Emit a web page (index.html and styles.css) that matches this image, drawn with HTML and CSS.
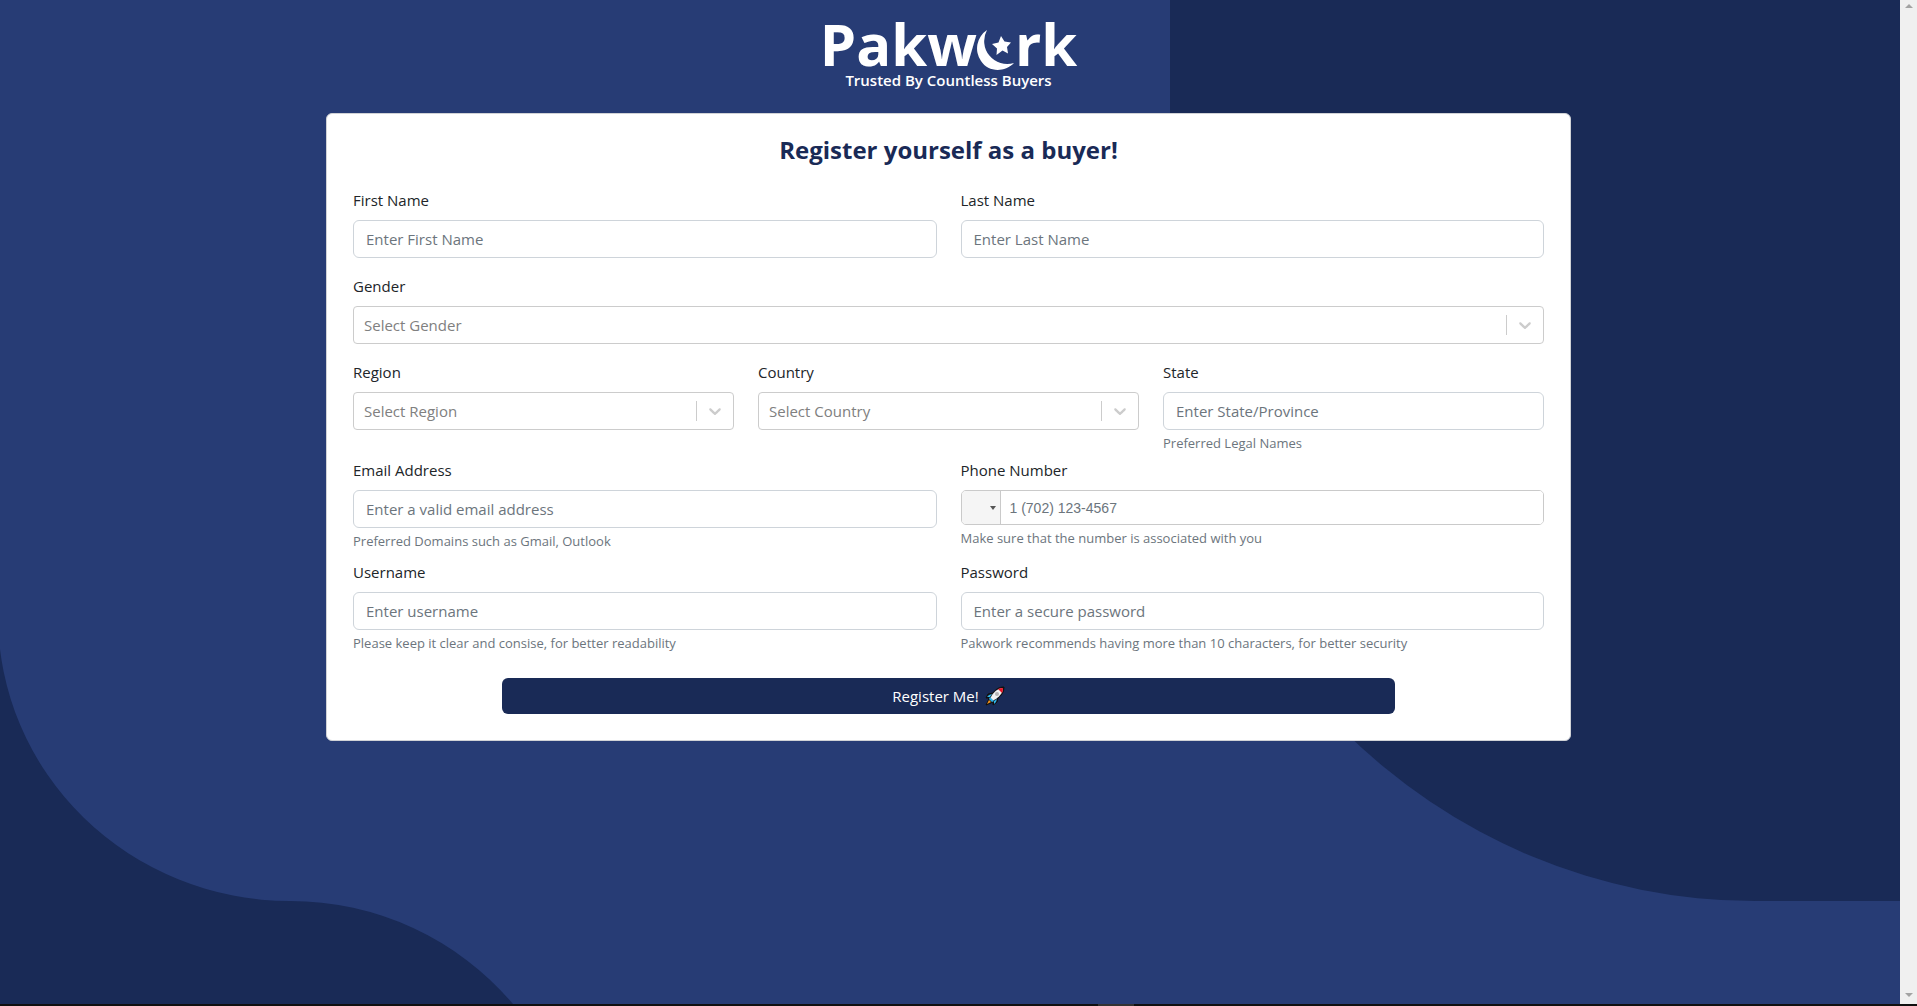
FILE: index.html
```html
<!DOCTYPE html>
<html lang="en">
<head>
<meta charset="utf-8">
<meta name="viewport" content="width=device-width, initial-scale=1">
<title>Pakwork – Register as a buyer</title>
<link rel="stylesheet" href="styles.css">
</head>
<body>
<div class="window">
  <div class="page">
    <svg class="backdrop" viewBox="0 0 1900 1004" preserveAspectRatio="none" aria-hidden="true">
      <path d="M1170 0H1900V901H1755A585 590 0 0 1 1170 311Z"/>
      <path d="M-2 616A292 285 0 0 0 290 901A290 285 0 0 1 513 1004H-2Z"/>
    </svg>

    <header class="brand">
      <div class="logo">
        <span>Pakw</span>
        <svg class="logo-moon" viewBox="0 0 38 40" aria-label="o" role="img">
          <path d="M10 0A22 22 0 0 0 4 31C11 42 27 43 37 33A23 23 0 0 1 10 0Z"/>
          <path d="M24 6L27.500 11.500L34 12.500L30 17L31 23.500L25.500 20.500L19.500 25L20 18.500L15 14L21.500 12.500Z"/>
        </svg>
        <span>rk</span>
      </div>
      <p class="tagline">Trusted By Countless Buyers</p>
    </header>

    <main class="card">
      <h1 class="title">Register yourself as a buyer!</h1>
      <form class="form">
        <div class="row">
          <div class="field">
            <label for="first">First Name</label>
            <input class="control" id="first" type="text" placeholder="Enter First Name">
          </div>
          <div class="field">
            <label for="last">Last Name</label>
            <input class="control" id="last" type="text" placeholder="Enter Last Name">
          </div>
        </div>

        <div class="row">
          <div class="field">
            <label for="gender">Gender</label>
            <div class="picker">
              <select class="control" id="gender"><option>Select Gender</option></select>
              <span class="indicator"><svg viewBox="0 0 20 20" aria-hidden="true"><path d="M4.516 7.548c0.436-0.446 1.043-0.481 1.576 0l3.908 3.747 3.908-3.747c0.533-0.481 1.141-0.446 1.574 0 0.436 0.445 0.408 1.197 0 1.615-0.406 0.418-4.695 4.502-4.695 4.502-0.217 0.223-0.502 0.335-0.787 0.335s-0.570-0.112-0.789-0.335c0 0-4.287-4.084-4.695-4.502s-0.436-1.170 0-1.615z"/></svg></span>
            </div>
          </div>
        </div>

        <div class="row row-hinted">
          <div class="field">
            <label for="region">Region</label>
            <div class="picker">
              <select class="control" id="region"><option>Select Region</option></select>
              <span class="indicator"><svg viewBox="0 0 20 20" aria-hidden="true"><path d="M4.516 7.548c0.436-0.446 1.043-0.481 1.576 0l3.908 3.747 3.908-3.747c0.533-0.481 1.141-0.446 1.574 0 0.436 0.445 0.408 1.197 0 1.615-0.406 0.418-4.695 4.502-4.695 4.502-0.217 0.223-0.502 0.335-0.787 0.335s-0.570-0.112-0.789-0.335c0 0-4.287-4.084-4.695-4.502s-0.436-1.170 0-1.615z"/></svg></span>
            </div>
          </div>
          <div class="field">
            <label for="country">Country</label>
            <div class="picker">
              <select class="control" id="country"><option>Select Country</option></select>
              <span class="indicator"><svg viewBox="0 0 20 20" aria-hidden="true"><path d="M4.516 7.548c0.436-0.446 1.043-0.481 1.576 0l3.908 3.747 3.908-3.747c0.533-0.481 1.141-0.446 1.574 0 0.436 0.445 0.408 1.197 0 1.615-0.406 0.418-4.695 4.502-4.695 4.502-0.217 0.223-0.502 0.335-0.787 0.335s-0.570-0.112-0.789-0.335c0 0-4.287-4.084-4.695-4.502s-0.436-1.170 0-1.615z"/></svg></span>
            </div>
          </div>
          <div class="field">
            <label for="state">State</label>
            <input class="control" id="state" type="text" placeholder="Enter State/Province">
            <small class="hint">Preferred Legal Names</small>
          </div>
        </div>

        <div class="row row-contact">
          <div class="field">
            <label for="email">Email Address</label>
            <input class="control" id="email" type="email" placeholder="Enter a valid email address">
            <small class="hint">Preferred Domains such as Gmail, Outlook</small>
          </div>
          <div class="field">
            <label for="phone">Phone Number</label>
            <div class="phone">
              <button class="dial" type="button" aria-label="Choose country code"></button>
              <input class="phone-input" id="phone" type="tel" placeholder="1 (702) 123-4567">
            </div>
            <small class="hint">Make sure that the number is associated with you</small>
          </div>
        </div>

        <div class="row row-hinted">
          <div class="field">
            <label for="username">Username</label>
            <input class="control" id="username" type="text" placeholder="Enter username">
            <small class="hint">Please keep it clear and consise, for better readability</small>
          </div>
          <div class="field">
            <label for="password">Password</label>
            <input class="control" id="password" type="password" placeholder="Enter a secure password">
            <small class="hint">Pakwork recommends having more than 10 characters, for better security</small>
          </div>
        </div>

        <button class="submit" type="submit">Register Me!
          <svg class="rocket" viewBox="0 0 20 20" aria-hidden="true">
            <path d="M19 1C14 1 11 3 8 7L3 8L1 12L4 12L3 15L1 19L6 17L8 16L8 19L12 16L13 12C17 9 19 6 19 1Z" fill="#111" stroke="#111" stroke-linejoin="round"/>
            <path d="M18 2C14 2 11 4 7 9L5 13L7 15L11 13C16 9 18 6 18 2Z" fill="#f2f2f2"/>
            <path d="M18 2Q15 2 13 3L17 7Q18 5 18 2Z" fill="#e81224"/>
            <path d="M7 8L4 9L2 11L5 11ZM12 13L11 16L9 18L9 15Z" fill="#31b4ea"/>
            <path d="M5 11L9 15L7 16L4 13Z" fill="#31b4ea"/>
            <path d="M4 14L6 16L2 18Z" fill="#f7941d"/>
            <circle cx="12" cy="8" r="2" fill="#b5b5b5"/>
          </svg>
        </button>
      </form>
    </main>
  </div>
  <div class="scrollbar" aria-hidden="true"><i class="arrow-up"></i><i class="arrow-down"></i></div>
  <div class="taskbar" aria-hidden="true"><i></i></div>
</div>
</body>
</html>
```
FILE: styles.css
```css
* { box-sizing: border-box; }

body {
  margin: 0;
  font: 15px/24px "Open Sans", "Noto Sans", sans-serif;
  color: #212529;
}

.window {
  display: grid;
  grid-template: 1fr 2px / 1fr 17px;
  min-height: 100vh;
}

.page {
  position: relative;
  isolation: isolate;
  padding-right: 3px;
  background: #273c75;
}

.backdrop {
  position: absolute;
  inset: 0;
  z-index: -1;
  width: 100%;
  height: 100%;
  fill: #192a56;
}

.brand {
  padding-top: 16px;
  color: #fff;
  text-align: center;
}

.logo {
  display: flex;
  justify-content: center;
  align-items: flex-start;
  height: 52px;
  font-size: 58px;
  font-weight: 700;
  line-height: 56px;
}

.logo-moon {
  width: 38px;
  height: 40px;
  margin-top: 14px;
  fill: #fff;
}

.tagline {
  margin: 0 0 21px;
  font-weight: 600;
}

.card {
  width: 1245px;
  max-width: calc(100% - 32px);
  margin: 0 auto;
  padding: 21px 26px 26px;
  border: 1px solid #d0d2d6;
  border-radius: 6px;
  background: #fff;
}

.title {
  margin: 0 0 23px;
  color: #192a56;
  font-size: 24px;
  font-weight: 700;
  line-height: 30px;
  text-align: center;
}

.row {
  display: grid;
  grid-auto-flow: column;
  grid-auto-columns: minmax(0, 1fr);
  gap: 24px;
  margin-bottom: 16px;
}

.row-hinted { margin-bottom: 0; }
.row-contact { margin-bottom: 4px; }

.field label {
  display: block;
  margin-bottom: 8px;
}

.control {
  display: block;
  width: 100%;
  height: 38px;
  padding: 0 12px;
  border: 1px solid #ced4da;
  border-radius: 6px;
  background: #fff;
  color: #212529;
  font: inherit;
}

::placeholder {
  color: #6c757d;
  opacity: 1;
}

.picker { position: relative; }

.picker .control {
  padding: 0 46px 0 10px;
  border-color: #ccc;
  border-radius: 4px;
  color: #808080;
  appearance: none;
}

.indicator {
  position: absolute;
  top: 9px;
  right: 1px;
  display: flex;
  align-items: center;
  padding: 0 8px;
  height: 20px;
  border-left: 1px solid #ccc;
  pointer-events: none;
}

.indicator svg {
  width: 20px;
  height: 20px;
  fill: #ccc;
}

.hint {
  display: block;
  margin-top: 4px;
  padding-bottom: 6px;
  color: #6c757d;
  font-size: 13px;
  line-height: 18px;
}

.phone {
  display: flex;
  height: 35px;
  border: 1px solid #cacaca;
  border-radius: 5px;
  overflow: hidden;
}

.dial {
  display: flex;
  align-items: center;
  justify-content: flex-end;
  width: 39px;
  padding: 0 4px;
  border: 0;
  border-right: 1px solid #cacaca;
  background: #f5f5f5;
}

.dial::after {
  content: "";
  border: 3px solid transparent;
  border-top: 4px solid #555;
  border-bottom: 0;
}

.phone-input {
  flex: 1;
  min-width: 0;
  padding: 0 9px;
  border: 0;
  font: 14px "Liberation Sans", Arial, sans-serif;
}

.submit {
  display: flex;
  align-items: center;
  justify-content: center;
  gap: 6px;
  width: 75%;
  height: 36px;
  margin: 20px auto 0;
  border: 0;
  border-radius: 6px;
  background: #192a56;
  color: #fff;
  font: inherit;
}

.rocket {
  width: 20px;
  height: 20px;
}

.scrollbar {
  display: flex;
  flex-direction: column;
  justify-content: space-between;
  align-items: center;
  padding: 4px 0 7px;
  background: #f0f0f0;
}

.arrow-up,
.arrow-down {
  border: 4px solid transparent;
}

.arrow-up {
  border-top: 0;
  border-bottom-color: #a3a3a3;
}

.arrow-down {
  border-bottom: 0;
  border-top-color: #a3a3a3;
}

.taskbar {
  grid-column: 1 / -1;
  display: grid;
  grid-template-columns: 1098fr 36fr 783fr;
  background: #101010;
}

.taskbar i {
  grid-column: 2;
  background: #333;
}
```
